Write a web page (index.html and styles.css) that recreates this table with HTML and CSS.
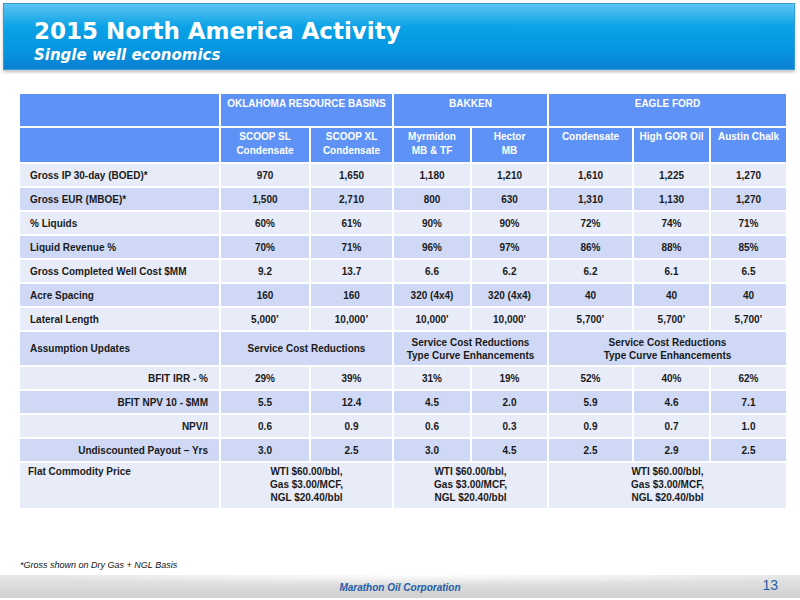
FILE: index.html
```html
<!DOCTYPE html>
<html lang="en">
<head>
  <meta charset="UTF-8" />
  <title>2015 North America Activity</title>
  <link rel="stylesheet" href="styles.css">
</head>
<body>

<div class="slide">
  <div class="title-bar">
    <h1>2015 North America Activity</h1>
    <h2>Single well economics</h2>
  </div>

  <table class="econ">
    <colgroup>
      <col style="width:200px">
      <col style="width:90px">
      <col style="width:83px">
      <col style="width:78px">
      <col style="width:77px">
      <col style="width:85px">
      <col style="width:77px">
      <col style="width:76px">
    </colgroup>
    <tr class="head1">
      <th></th>
      <th colspan="2">OKLAHOMA RESOURCE BASINS</th>
      <th colspan="2">BAKKEN</th>
      <th colspan="3">EAGLE FORD</th>
    </tr>
    <tr class="head2">
      <th></th>
      <th>SCOOP SL<br>Condensate</th>
      <th>SCOOP XL<br>Condensate</th>
      <th>Myrmidon<br>MB &amp; TF</th>
      <th>Hector<br>MB</th>
      <th>Condensate</th>
      <th>High GOR Oil</th>
      <th>Austin Chalk</th>
    </tr>
    <tr class="light">
      <td class="label">Gross IP 30-day (BOED)*</td>
      <td>970</td><td>1,650</td><td>1,180</td><td>1,210</td><td>1,610</td><td>1,225</td><td>1,270</td>
    </tr>
    <tr class="dark">
      <td class="label">Gross EUR (MBOE)*</td>
      <td>1,500</td><td>2,710</td><td>800</td><td>630</td><td>1,310</td><td>1,130</td><td>1,270</td>
    </tr>
    <tr class="light">
      <td class="label">% Liquids</td>
      <td>60%</td><td>61%</td><td>90%</td><td>90%</td><td>72%</td><td>74%</td><td>71%</td>
    </tr>
    <tr class="dark">
      <td class="label">Liquid Revenue %</td>
      <td>70%</td><td>71%</td><td>96%</td><td>97%</td><td>86%</td><td>88%</td><td>85%</td>
    </tr>
    <tr class="light">
      <td class="label">Gross Completed Well Cost $MM</td>
      <td>9.2</td><td>13.7</td><td>6.6</td><td>6.2</td><td>6.2</td><td>6.1</td><td>6.5</td>
    </tr>
    <tr class="dark">
      <td class="label">Acre Spacing</td>
      <td>160</td><td>160</td><td>320 (4x4)</td><td>320 (4x4)</td><td>40</td><td>40</td><td>40</td>
    </tr>
    <tr class="light">
      <td class="label">Lateral Length</td>
      <td>5,000’</td><td>10,000’</td><td>10,000'</td><td>10,000'</td><td>5,700’</td><td>5,700’</td><td>5,700’</td>
    </tr>
    <tr class="dark tall">
      <td class="label">Assumption Updates</td>
      <td colspan="2">Service Cost Reductions</td>
      <td colspan="2">Service Cost Reductions<br>Type Curve Enhancements</td>
      <td colspan="3">Service Cost Reductions<br>Type Curve Enhancements</td>
    </tr>
    <tr class="light">
      <td class="label right">BFIT IRR - %</td>
      <td>29%</td><td>39%</td><td>31%</td><td>19%</td><td>52%</td><td>40%</td><td>62%</td>
    </tr>
    <tr class="dark">
      <td class="label right">BFIT NPV 10 - $MM</td>
      <td>5.5</td><td>12.4</td><td>4.5</td><td>2.0</td><td>5.9</td><td>4.6</td><td>7.1</td>
    </tr>
    <tr class="light">
      <td class="label right">NPV/I</td>
      <td>0.6</td><td>0.9</td><td>0.6</td><td>0.3</td><td>0.9</td><td>0.7</td><td>1.0</td>
    </tr>
    <tr class="dark">
      <td class="label right">Undiscounted Payout – Yrs</td>
      <td>3.0</td><td>2.5</td><td>3.0</td><td>4.5</td><td>2.5</td><td>2.9</td><td>2.5</td>
    </tr>
    <tr class="light price">
      <td class="label">Flat Commodity Price</td>
      <td colspan="2">WTI $60.00/bbl,<br>Gas $3.00/MCF,<br>NGL $20.40/bbl</td>
      <td colspan="2">WTI $60.00/bbl,<br>Gas $3.00/MCF,<br>NGL $20.40/bbl</td>
      <td colspan="3">WTI $60.00/bbl,<br>Gas $3.00/MCF,<br>NGL $20.40/bbl</td>
    </tr>
  </table>

  <div class="footnote">*Gross shown on Dry Gas + NGL Basis</div>

  <div class="footer">
    <span class="company">Marathon Oil Corporation</span>
    <span class="page-num">13</span>
  </div>
</div>

</body>
</html>
```

FILE: styles.css
```css
body {
  margin: 0;
  padding: 0;
  background: #ffffff;
  font-family: "Liberation Sans", Arial, sans-serif;
}

.slide {
  width: 800px;
  height: 600px;
  position: relative;
  overflow: hidden;
}

.title-bar {
  margin: 3px 5px 0 3px;
  height: 67px;
  box-sizing: border-box;
  padding: 13px 0 0 30px;
  background: linear-gradient(to bottom, #5cc4f2 0%, #0ba2e6 35%, #0596e0 70%, #0a7fd2 100%);
  border: 1px solid #3a9ad6;
  box-shadow: 0 2px 3px rgba(0,0,0,0.25);
  color: #fff;
}

.title-bar h1 {
  margin: 0;
  font-family: "DejaVu Sans", sans-serif;
  font-weight: bold;
  font-size: 23px;
  line-height: 28px;
}

.title-bar h2 {
  margin: 1px 0 0 0;
  font-family: "DejaVu Sans", sans-serif;
  font-weight: bold;
  font-style: italic;
  font-size: 15px;
  line-height: 18px;
}

.econ {
  margin: 24px 0 0 20px;
  width: 766px;
  table-layout: fixed;
  border-collapse: collapse;
  font-size: 10px;
  font-weight: bold;
  color: #1a1a1a;
}

.econ th,
.econ td {
  border: 2px solid #ffffff;
  padding: 0;
  text-align: center;
}

.econ tr:first-child th { border-top: 0; }
.econ th:first-child,
.econ td:first-child { border-left: 0; }
.econ th:last-child,
.econ td:last-child { border-right: 0; }

.econ th {
  background: #5e92f6;
  color: #ffffff;
  vertical-align: top;
  line-height: 14px;
}

.head1 th {
  height: 29px;
  padding-top: 3px;
}

.head2 th {
  height: 32px;
  padding-top: 2px;
}

.econ td {
  height: 22px;
  line-height: 13px;
}

.light td { background: #e8ecf8; }
.dark td { background: #cfd9f5; }

.econ td.label {
  text-align: left;
  padding-left: 10px;
}

.econ td.right {
  text-align: right;
  padding-left: 0;
  padding-right: 11px;
}

.tall td {
  height: 33px;
}

.price td {
  height: 43px;
  vertical-align: top;
  padding-top: 2px;
}

.price td.label {
  padding-left: 8px;
}

.footnote {
  position: absolute;
  left: 20px;
  top: 560px;
  font-size: 9px;
  font-style: italic;
  color: #111;
}

.footer {
  position: absolute;
  left: 0;
  right: 0;
  top: 575px;
  height: 23px;
  background:
    radial-gradient(ellipse 420px 10px at 52% 0%, rgba(255,255,255,0.9), rgba(255,255,255,0) 100%),
    linear-gradient(to bottom, #e6e6e6, #cfcfcf);
  display: flex;
  justify-content: center;
  align-items: center;
}

.company {
  font-size: 10px;
  font-weight: bold;
  font-style: italic;
  color: #1f5ea8;
  margin-top: 2px;
}

.page-num {
  position: absolute;
  right: 22px;
  top: 2px;
  font-size: 14px;
  color: #1f5ea8;
}
```
